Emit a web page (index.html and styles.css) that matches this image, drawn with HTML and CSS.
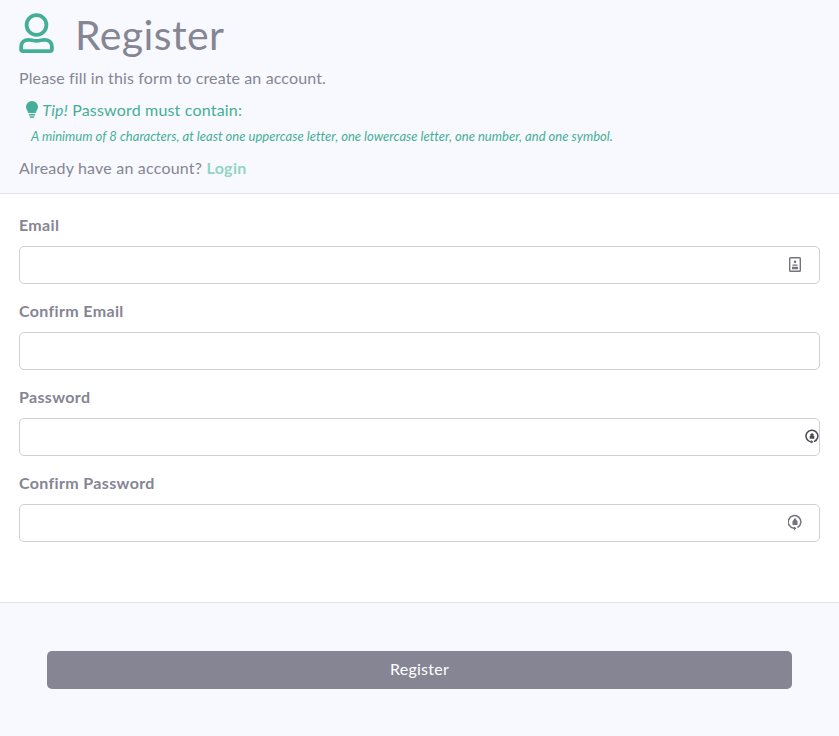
FILE: index.html
```html
<!DOCTYPE html>
<html>
<head>
	<title>Register</title>
	<link rel="stylesheet" href="styles.css">
</head>
<body>

	<div class="header">
		<div class="title">
			<svg class="userIcon" width="36" height="40" viewBox="0 0 36 40" fill="none" stroke="#45ae98" stroke-width="3.8">
				<circle cx="17.500" cy="12" r="9.900"/>
				<path d="M9.500 26.800c2.800 0 4.500 1 8 1s5.200-1 8-1c4.400 0 7.400 2.800 7.400 6.800v2.600c0 1.200-.7 1.900-1.900 1.900H4c-1.200 0-1.900-.7-1.900-1.900v-2.600c0-4 3-6.800 7.400-6.800z" stroke-linejoin="round"/>
			</svg>
			<h1>Register</h1>
		</div>
		<p class="intro">Please fill in this form to create an account.</p>
		<p class="tip">
			<svg class="bulb" width="12" height="17" viewBox="0 0 12 17" fill="#45ae98">
				<path d="M6 0a6 6 0 0 1 6 6c0 2.400-1.700 3.500-2.300 6H2.300C1.700 9.500 0 8.400 0 6a6 6 0 0 1 6-6z"/>
				<rect x="2.800" y="13" width="6.400" height="1.600" rx=".6"/>
				<rect x="3.600" y="15.200" width="4.800" height="1.500" rx=".6"/>
			</svg>
			<em>Tip!</em> Password must contain:
		</p>
		<p class="rules">A minimum of 8 characters, at least one uppercase letter, one lowercase letter, one number, and one symbol.</p>
		<p class="login">Already have an account? <a href="#">Login</a></p>
	</div>

	<form class="fields">
		<label>Email</label>
		<div class="field">
			<input type="text">
			<svg class="fieldIcon idIcon" width="12" height="15" viewBox="0 0 12 15">
				<rect x=".7" y=".7" width="10.600" height="13.600" rx=".8" fill="none" stroke="#74747c" stroke-width="1.400"/>
				<circle cx="6" cy="4.800" r="1.300" fill="#74747c"/>
				<path d="M3.500 7.500h5v1.200h-5zM3 9.800h6v2.400H3z" fill="#74747c"/>
			</svg>
		</div>

		<label>Confirm Email</label>
		<div class="field">
			<input type="text">
		</div>

		<label>Password</label>
		<div class="field">
			<input type="password">
			<svg class="fieldIcon keyIcon" width="14" height="15" viewBox="0 0 14 15">
				<path d="M6 12.900A5.900 5.900 0 1 1 9 12.600" fill="none" stroke="#4c4c52" stroke-width="1.500"/>
				<circle cx="7" cy="6" r="1.800" fill="#4c4c52"/>
				<path d="M4.700 7h4.600v2.800H4.700zM6.200 11l2.200 1.700L6.200 14.700z" fill="#4c4c52"/>
			</svg>
		</div>

		<label>Confirm Password</label>
		<div class="field">
			<input type="password">
			<svg class="fieldIcon keyIcon confirmKey" width="14" height="17" viewBox="0 0 14 17">
				<path d="M6 14.200A6.300 6.300 0 1 1 9.500 13.500" fill="none" stroke="#74747c" stroke-width="1.500"/>
				<path d="M7 3.800L9.500 7.500v3.500H4.500V7.500z" fill="#74747c"/>
				<path d="M6 12.500L8.500 14.300 6 16.500z" fill="#74747c"/>
			</svg>
		</div>
	</form>

	<div class="footer">
		<button type="button">Register</button>
	</div>

</body>
</html>
```

FILE: styles.css
```css
body{
	margin: 0;
	background-color: #fff;
	font-family: "Lato", "Noto Sans", sans-serif;
	color: #858594;
}

p{
	margin: 0;
}

.header{
	height: 194px;
	padding: 0 19px;
	box-sizing: border-box;
	background-color: #f8f9fe;
	border-bottom: 1px solid #e3e3ea;
}

.title{
	display: flex;
	align-items: center;
	height: 69px;
}

.userIcon{
	margin-right: 20px;
	margin-top: -3px;
}

h1{
	margin: -1px 0 0 0;
	font-size: 41px;
	font-weight: 400;
	line-height: 69px;
	letter-spacing: .4px;
}

.intro{
	font-size: 16px;
	line-height: 18px;
	letter-spacing: .13px;
}

.tip{
	margin: 14px 0 0 7px;
	font-size: 16px;
	line-height: 18px;
	letter-spacing: .18px;
	color: #45ae98;
}

.bulb{
	vertical-align: -2px;
}

.rules{
	margin: 9px 0 0 12px;
	font-size: 13px;
	line-height: 16px;
	letter-spacing: .02px;
	font-style: italic;
	color: #45ae98;
}

.login{
	margin-top: 15px;
	font-size: 16px;
	line-height: 18px;
	letter-spacing: .2px;
}

.login a{
	font-weight: 700;
	letter-spacing: .35px;
	color: #92d4c5;
	text-decoration: none;
}

.fields{
	height: 409px;
	padding: 21px 19px 0;
	box-sizing: border-box;
	border-bottom: 1px solid #e3e3ea;
}

label{
	display: block;
	height: 20px;
	margin-bottom: 11px;
	font-size: 16px;
	font-weight: 700;
	line-height: 20px;
	letter-spacing: .35px;
}

.field{
	position: relative;
	height: 38px;
	margin-bottom: 17px;
}

input{
	display: block;
	width: 100%;
	height: 38px;
	box-sizing: border-box;
	background-color: #fff;
	border: 1px solid #cfcfd6;
	border-radius: 5px;
}

.fieldIcon{
	position: absolute;
	top: 11px;
	right: 19px;
}

.keyIcon{
	right: 1px;
}

.confirmKey{
	right: 18px;
	top: 10px;
}

.footer{
	height: 133px;
	padding: 48px 47px 0;
	box-sizing: border-box;
	background-color: #f8f9fe;
}

button{
	display: block;
	width: 100%;
	height: 38px;
	padding: 0 0 3px;
	font-family: inherit;
	font-size: 16px;
	letter-spacing: .25px;
	color: #fff;
	background-color: #858594;
	border: 0;
	border-radius: 5px;
}
```
